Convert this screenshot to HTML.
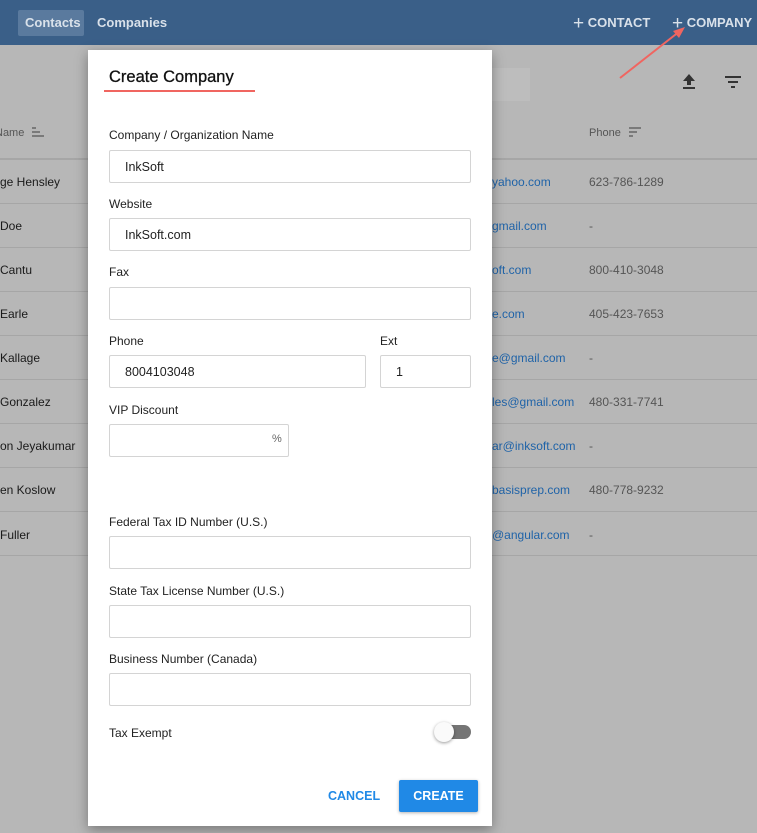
<!DOCTYPE html>
<html><head><meta charset="utf-8"><style>
*{box-sizing:border-box;margin:0;padding:0}
body{width:757px;height:833px;position:relative;overflow:hidden;background:#b7b7b7;font-family:"Liberation Sans",sans-serif;}
.a{position:absolute;white-space:nowrap}
.hdr{position:absolute;left:0;top:0;width:757px;height:45px;background:#3a5f88;}
.nav{color:#d9e1ea;font-size:13px;font-weight:bold;}
.row{position:absolute;left:0;width:757px;height:1px;background:#a6a6a6}
.nm{font-size:12px;color:#1a1a1a}
.em{font-size:12px;color:#1f63a8}
.ph{font-size:12px;color:#555}
.modal{position:absolute;left:88px;top:50px;width:404px;height:776px;background:#fff;box-shadow:0 4px 12px rgba(0,0,0,.35)}
.lbl{font-size:12px;color:#222}
.inp{position:absolute;border:1px solid #d4d4d4;border-radius:2px;height:33px;font-size:12.5px;color:#222;padding:9px 0 0 15px}
</style></head><body>
<div class="hdr"></div>
<div class="a" style="left:18px;top:10px;height:26px;background:#5a7a9e;border-radius:2px;width:66px"></div>
<div class="a nav" style="left:25px;top:15px">Contacts</div>
<div class="a nav" style="left:97px;top:15px">Companies</div>
<div class="a nav" style="left:573px;top:13px;font-size:13px"><span style="font-weight:normal;font-size:19px;vertical-align:-2px">+</span> CONTACT</div>
<div class="a nav" style="left:672px;top:13px;font-size:13px"><span style="font-weight:normal;font-size:19px;vertical-align:-2px">+</span> COMPANY</div>
<svg class="a" style="left:615px;top:25px" width="75" height="60"><line x1="5" y1="53" x2="65" y2="6" stroke="#f06560" stroke-width="2"/><polygon points="70,2 58,6 64,13" fill="#f06560"/></svg>
<div class="a" style="left:492px;top:68px;width:38px;height:33px;background:#bdbdbd"></div>
<svg class="a" style="left:681px;top:73px" width="16" height="18"><path d="M8 1 L14 8 H10 V12 H6 V8 H2Z M2 14 H14 V16 H2Z" fill="#333"/></svg>
<svg class="a" style="left:724px;top:76px" width="18" height="14"><path d="M1 1H17M4 6H14M7 11H11" stroke="#333" stroke-width="2"/></svg>
<div class="a ph" style="left:-5px;top:127px;font-size:11px">Name</div>
<svg class="a" style="left:31px;top:127px" width="14" height="12"><path d="M1 1H5M1 5H9M1 9H13" stroke="#555" stroke-width="1.3"/></svg>
<div class="a ph" style="left:589px;top:127px;font-size:11px">Phone</div>
<svg class="a" style="left:628px;top:127px" width="14" height="12"><path d="M1 1H13M1 5H9M1 9H5" stroke="#555" stroke-width="1.3"/></svg>
<div class="row" style="top:158px;height:2px"></div>
<div class="row" style="top:203px"></div><div class="row" style="top:247px"></div><div class="row" style="top:291px"></div><div class="row" style="top:335px"></div><div class="row" style="top:379px"></div><div class="row" style="top:423px"></div><div class="row" style="top:467px"></div><div class="row" style="top:511px"></div><div class="row" style="top:555px"></div>
<div class="a nm" style="left:0;top:175px">ge Hensley</div><div class="a em" style="left:492px;top:175px">yahoo.com</div><div class="a ph" style="left:589px;top:175px">623-786-1289</div>
<div class="a nm" style="left:0;top:219px">Doe</div><div class="a em" style="left:492px;top:219px">gmail.com</div><div class="a ph" style="left:589px;top:219px">-</div>
<div class="a nm" style="left:0;top:263px">Cantu</div><div class="a em" style="left:492px;top:263px">oft.com</div><div class="a ph" style="left:589px;top:263px">800-410-3048</div>
<div class="a nm" style="left:0;top:307px">Earle</div><div class="a em" style="left:492px;top:307px">e.com</div><div class="a ph" style="left:589px;top:307px">405-423-7653</div>
<div class="a nm" style="left:0;top:351px">Kallage</div><div class="a em" style="left:492px;top:351px">e@gmail.com</div><div class="a ph" style="left:589px;top:351px">-</div>
<div class="a nm" style="left:0;top:395px">Gonzalez</div><div class="a em" style="left:492px;top:395px">les@gmail.com</div><div class="a ph" style="left:589px;top:395px">480-331-7741</div>
<div class="a nm" style="left:0;top:439px">on Jeyakumar</div><div class="a em" style="left:492px;top:439px">ar@inksoft.com</div><div class="a ph" style="left:589px;top:439px">-</div>
<div class="a nm" style="left:0;top:483px">en Koslow</div><div class="a em" style="left:492px;top:483px">basisprep.com</div><div class="a ph" style="left:589px;top:483px">480-778-9232</div>
<div class="a nm" style="left:0;top:528px">Fuller</div><div class="a em" style="left:492px;top:528px">@angular.com</div><div class="a ph" style="left:589px;top:528px">-</div>

<div class="modal"></div>
<div class="a" style="left:109px;top:68px;font-size:16.5px;color:#111;-webkit-text-stroke:0.3px #111">Create Company</div>
<div class="a" style="left:104px;top:90px;width:151px;height:2px;background:#f06560"></div>
<div class="a lbl" style="left:109px;top:128px">Company / Organization Name</div>
<div class="inp" style="left:109px;top:150px;width:362px">InkSoft</div>
<div class="a lbl" style="left:109px;top:197px">Website</div>
<div class="inp" style="left:109px;top:218px;width:362px">InkSoft.com</div>
<div class="a lbl" style="left:109px;top:265px">Fax</div>
<div class="inp" style="left:109px;top:287px;width:362px"></div>
<div class="a lbl" style="left:109px;top:334px">Phone</div>
<div class="a lbl" style="left:380px;top:334px">Ext</div>
<div class="inp" style="left:109px;top:355px;width:257px">8004103048</div>
<div class="inp" style="left:380px;top:355px;width:91px">1</div>
<div class="a lbl" style="left:109px;top:403px">VIP Discount</div>
<div class="inp" style="left:109px;top:424px;width:180px"></div>
<div class="a" style="left:272px;top:433px;font-size:11px;color:#666">%</div>
<div class="a lbl" style="left:109px;top:515px">Federal Tax ID Number (U.S.)</div>
<div class="inp" style="left:109px;top:536px;width:362px"></div>
<div class="a lbl" style="left:109px;top:584px">State Tax License Number (U.S.)</div>
<div class="inp" style="left:109px;top:605px;width:362px"></div>
<div class="a lbl" style="left:109px;top:652px">Business Number (Canada)</div>
<div class="inp" style="left:109px;top:673px;width:362px"></div>
<div class="a lbl" style="left:109px;top:726px">Tax Exempt</div>
<div class="a" style="left:439px;top:725px;width:32px;height:14px;border-radius:7px;background:#757575"></div>
<div class="a" style="left:434px;top:722px;width:20px;height:20px;border-radius:50%;background:#fafafa;box-shadow:0 1px 3px rgba(0,0,0,.4)"></div>
<div class="a" style="left:328px;top:789px;font-size:12.5px;font-weight:bold;color:#2089e6">CANCEL</div>
<div class="a" style="left:399px;top:780px;width:79px;height:32px;background:#2089e6;border-radius:2px;box-shadow:0 1px 3px rgba(0,0,0,.3);color:#fff;font-size:12.5px;font-weight:bold;text-align:center;line-height:32px">CREATE</div>
</body></html>
